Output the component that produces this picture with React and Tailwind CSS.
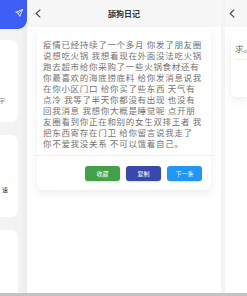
import React from "react";

const lines = [
  "疫情已经持续了一个多月 你发了朋友圈",
  "说想吃火锅 我想着现在外面没法吃火锅",
  "跑去超市给你采购了一些火锅食材还有",
  "你最喜欢的海底捞底料 给你发消息说我",
  "在你小区门口 给你买了些东西 天气有",
  "点冷 我等了半天你都没有出现 也没有",
  "回我消息 我想你大概是睡觉呢 点开朋",
  "友圈看到你正在和别的女生双排王者 我",
  "把东西寄存在门卫 给你留言说我走了",
  "你不爱我没关系 不可以饿着自己。",
];

function Chevron({ className }) {
  return (
    <svg className={className} width="6" height="9" viewBox="0 0 6 9" fill="none">
      <polyline points="5,0.8 1.2,4.5 5,8.2" stroke="#444" strokeWidth="1.1" strokeLinecap="round" strokeLinejoin="round" />
    </svg>
  );
}

function SendIcon() {
  return (
    <svg width="8" height="8" viewBox="0 0 24 24" fill="none" stroke="white" strokeWidth="2.4" strokeLinejoin="round" strokeLinecap="round">
      <path d="M22 2 2 9.5l8 3.5 3.5 8z" />
      <path d="M22 2 10 13" />
    </svg>
  );
}

export default function App() {
  return (
    <div
      className="w-[247px] h-[296px] overflow-hidden bg-[#f4f4f4] flex flex-col"
      style={{ fontFamily: '"Noto Sans CJK SC", "Noto Sans", sans-serif' }}
    >
      <div className="flex flex-1 min-h-0">
        {/* left page */}
        <div className="w-[27px] shrink-0 flex flex-col bg-[#f3f3f3]">
          <div className="h-[29px] w-[27px] bg-[#3f5ef5] rounded-br-[9px] flex items-center justify-end pr-[4px] pb-[4px]">
            <SendIcon />
          </div>
          <div className="mt-[11px] w-[18px] h-[82px] bg-white rounded-r-[7px] overflow-hidden flex items-end justify-end pb-[18px] pr-[13px]">
            <span className="text-[6px] leading-none text-[#888] whitespace-nowrap">字</span>
          </div>
          <div className="mt-[13px] w-[18px] h-[82px] bg-white rounded-r-[7px] overflow-hidden flex items-end justify-end pb-[24px] pr-[10px]">
            <span className="text-[6px] leading-none text-[#222] whitespace-nowrap">速</span>
          </div>
          <div className="mt-[13px] w-[18px] flex-1 bg-white rounded-tr-[7px]" />
        </div>

        {/* center page */}
        <div className="w-[194px] shrink-0 flex flex-col bg-white shadow-[-3px_0_6px_rgba(0,0,0,0.04)]">
          <div className="h-[27px] bg-[#f7f7f7] flex items-center px-[8px]">
            <Chevron className="shrink-0" />
            <div className="flex-1 text-center text-[8px] font-bold text-[#333] leading-none pr-[6px]">舔狗日记</div>
          </div>
          <div className="px-[10px] pt-[1px]">
            <div className="bg-white rounded-[6px] shadow-[0_3px_10px_rgba(0,0,0,0.08)] pt-[11px] pb-[9px]">
              <p className="px-[6px] text-[8.5px] leading-[11px] tracking-[0.7px] text-[#727272]">
                {lines.map((l, i) => (
                  <span key={i} className="block whitespace-nowrap">{l}</span>
                ))}
              </p>
              <div className="mt-[6px] h-px bg-[#eeeeee]" />
              <div className="mt-[10px] flex justify-end gap-[6px] pr-[9px]">
                <button className="w-[35px] h-[15px] rounded-[3px] bg-[#43a047] text-white text-[6px] leading-none shadow-[0_1px_2px_rgba(0,0,0,0.15)]">收藏</button>
                <button className="w-[35px] h-[15px] rounded-[3px] bg-[#3949ab] text-white text-[6px] leading-none shadow-[0_1px_2px_rgba(0,0,0,0.15)]">复制</button>
                <button className="w-[35px] h-[15px] rounded-[3px] bg-[#2196f3] text-white text-[6px] leading-none shadow-[0_1px_2px_rgba(0,0,0,0.15)]">下一条</button>
              </div>
            </div>
          </div>
        </div>

        {/* right page */}
        <div className="flex-1 flex flex-col bg-white ml-[4px] min-w-0">
          <div className="h-[27px] bg-[#f7f7f7] flex items-center pl-[4px]">
            <Chevron className="shrink-0" />
          </div>
          <div className="pl-[6px] pt-[5px]">
            <div className="bg-white rounded-l-[6px] shadow-[0_3px_10px_rgba(0,0,0,0.08)] h-[65px] pt-[11px] pl-[4px] overflow-hidden">
              <span className="block text-[8.5px] leading-[11px] text-[#727272] whitespace-nowrap">求。</span>
              <div className="mt-[5px] h-px bg-[#eeeeee]" />
            </div>
          </div>
        </div>
      </div>
      <div className="h-[3px] bg-[#c4c4c4] shrink-0" />
    </div>
  );
}
